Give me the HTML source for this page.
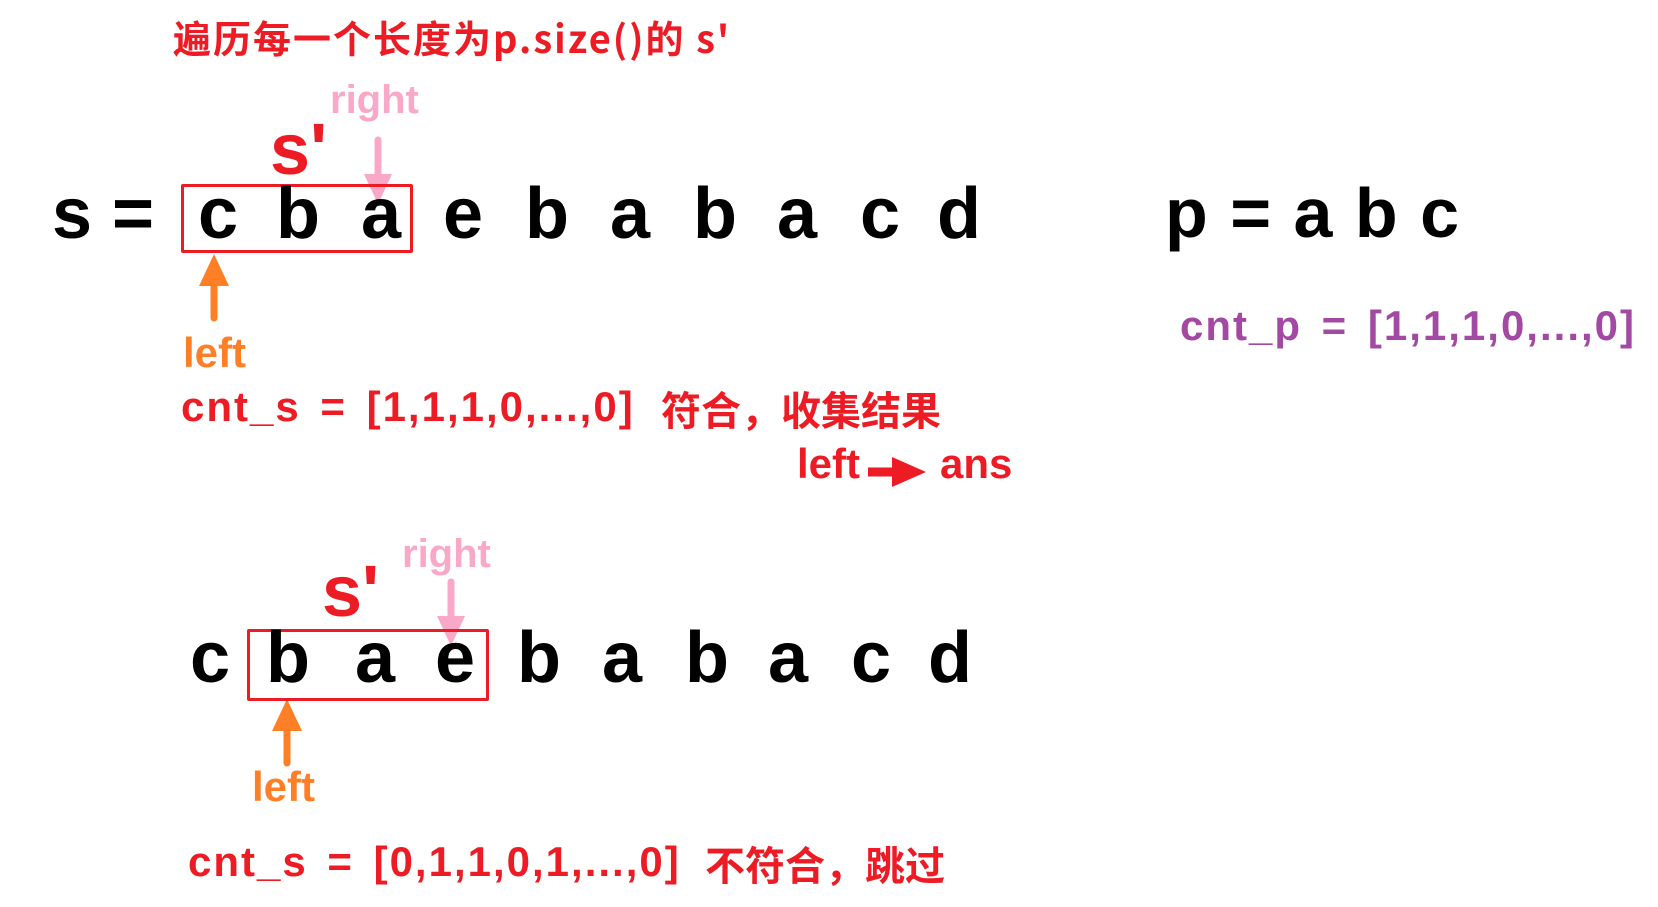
<!DOCTYPE html>
<html><head><meta charset="utf-8"><style>
body{margin:0;width:1658px;height:907px;background:#fff;position:relative;overflow:hidden;font-family:"Liberation Sans","Noto Sans CJK SC",sans-serif;font-weight:bold}
.t{position:absolute;white-space:nowrap;line-height:1}
.k{color:#000;font-size:72px}
.red{color:#ed1c24}
.pink{color:#f9a8c8}
.or{color:#ff7f27}
.pu{color:#a349a4}
.box{position:absolute;border:3px solid #ed1c24;border-radius:2px}
.cnt{font-size:42px;letter-spacing:2px;word-spacing:6px}
</style></head><body>
<div class="t red" style="left:173px;top:18px;font-size:38px;letter-spacing:2px;font-family:'Noto Sans CJK SC','Liberation Sans',sans-serif">遍历每一个长度为p.size()的 s'</div>

<div class="t pink" style="left:330px;top:80px;font-size:40px">right</div>
<div class="t red" style="left:270px;top:114px;font-size:72px">s'</div>
<svg style="position:absolute;left:0;top:0" width="1658" height="907">
<line x1="378" y1="140" x2="378" y2="180" stroke="#f9a8c8" stroke-width="7" stroke-linecap="round"/>
<polygon points="364,174 392,174 378,204" fill="#f9a8c8"/>
<line x1="214" y1="318" x2="214" y2="275" stroke="#ff7f27" stroke-width="7" stroke-linecap="round"/>
<polygon points="199,286 229,286 214,254" fill="#ff7f27"/>
<line x1="451" y1="582" x2="451" y2="622" stroke="#f9a8c8" stroke-width="7" stroke-linecap="round"/>
<polygon points="437,616 465,616 451,646" fill="#f9a8c8"/>
<line x1="287" y1="763" x2="287" y2="720" stroke="#ff7f27" stroke-width="7" stroke-linecap="round"/>
<polygon points="272,731 302,731 287,699" fill="#ff7f27"/>
<line x1="868" y1="472" x2="896" y2="472" stroke="#ed1c24" stroke-width="9"/>
<polygon points="892,457 926,472 892,487" fill="#ed1c24"/>
</svg>
<div class="box" style="left:181px;top:184px;width:226px;height:63px"></div>

<div class="t k" style="left:52px;top:178px">s</div>
<div class="t k" style="left:112px;top:178px">=</div>
<div class="t k" style="left:198px;top:178px">c</div>
<div class="t k" style="left:276px;top:178px">b</div>
<div class="t k" style="left:361px;top:178px">a</div>
<div class="t k" style="left:443px;top:178px">e</div>
<div class="t k" style="left:525px;top:178px">b</div>
<div class="t k" style="left:610px;top:178px">a</div>
<div class="t k" style="left:693px;top:178px">b</div>
<div class="t k" style="left:777px;top:178px">a</div>
<div class="t k" style="left:860px;top:178px">c</div>
<div class="t k" style="left:937px;top:178px">d</div>

<div class="t k" style="left:1165px;top:178px;font-size:70px;word-spacing:3px">p = a b c</div>

<div class="t or" style="left:183px;top:332px;font-size:42px">left</div>
<div class="t red cnt" style="left:181px;top:386px">cnt_s = [1,1,1,0,...,0]</div>
<div class="t red" style="left:661px;top:386px;font-size:40px;font-family:'Noto Sans CJK SC',sans-serif;line-height:1.1">符合，收集结果</div>
<div class="t red" style="left:797px;top:443px;font-size:42px">left</div>
<div class="t red" style="left:940px;top:443px;font-size:42px">ans</div>

<div class="t pu cnt" style="left:1180px;top:305px">cnt_p = [1,1,1,0,...,0]</div>

<div class="t pink" style="left:402px;top:534px;font-size:40px">right</div>
<div class="t red" style="left:322px;top:556px;font-size:72px">s'</div>
<div class="box" style="left:247px;top:629px;width:236px;height:66px"></div>
<div class="t k" style="left:190px;top:622px">c</div>
<div class="t k" style="left:266px;top:622px">b</div>
<div class="t k" style="left:355px;top:622px">a</div>
<div class="t k" style="left:435px;top:622px">e</div>
<div class="t k" style="left:517px;top:622px">b</div>
<div class="t k" style="left:602px;top:622px">a</div>
<div class="t k" style="left:685px;top:622px">b</div>
<div class="t k" style="left:768px;top:622px">a</div>
<div class="t k" style="left:851px;top:622px">c</div>
<div class="t k" style="left:928px;top:622px">d</div>

<div class="t or" style="left:252px;top:766px;font-size:42px">left</div>
<div class="t red cnt" style="left:188px;top:841px">cnt_s = [0,1,1,0,1,...,0]</div>
<div class="t red" style="left:705px;top:841px;font-size:40px;font-family:'Noto Sans CJK SC',sans-serif;line-height:1.1">不符合，跳过</div>
</body></html>
